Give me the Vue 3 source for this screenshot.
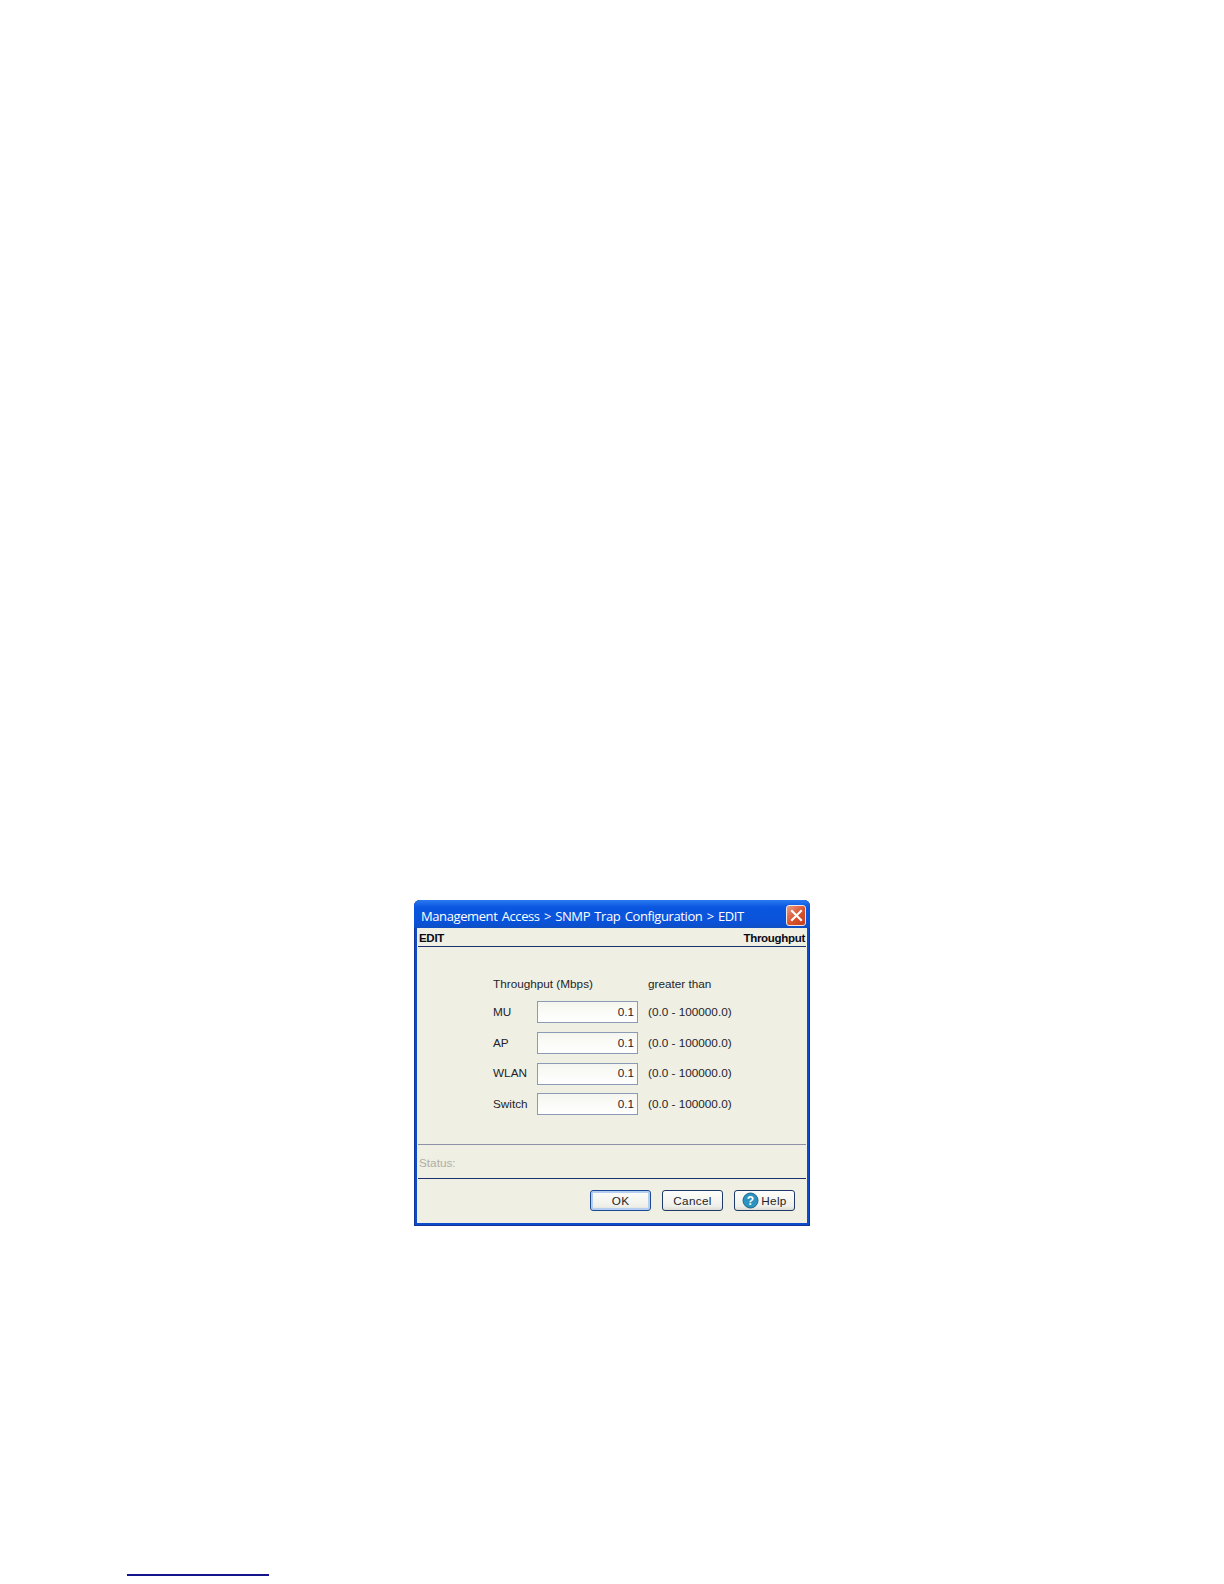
<template>
  <div class="page">
    <div class="window">
      <div class="titlebar">
        <span class="title">Management Access &gt; SNMP Trap Configuration &gt; EDIT</span>
        <div class="close">
          <svg width="13" height="13" viewBox="0 0 13 13">
            <path d="M2 2 L11 11 M11 2 L2 11" stroke="#fff" stroke-width="2.2" stroke-linecap="square" fill="none" />
          </svg>
        </div>
      </div>
      <div class="body">
        <div class="head">
          <span>EDIT</span>
          <span>Throughput</span>
        </div>
        <div class="form">
          <div class="form-head">
            <span class="col-title">Throughput (Mbps)</span>
            <span>greater than</span>
          </div>
          <div v-for="row in rows" :key="row" class="row">
            <label class="label">{{ row }}</label>
            <input class="field" value="0.1" readonly>
            <span class="hint">(0.0 - 100000.0)</span>
          </div>
        </div>
        <div class="status">Status:</div>
        <div class="actions">
          <button class="btn btn-default">OK</button>
          <button class="btn">Cancel</button>
          <button class="btn btn-help">
            <svg width="17" height="17" viewBox="0 0 17 17">
              <circle cx="8.5" cy="8.5" r="7.5" fill="#2a93c0" stroke="#1a6a8c" stroke-width="1" />
              <text x="8.5" y="12.5" text-anchor="middle" class="q">?</text>
            </svg>
            Help
          </button>
        </div>
      </div>
    </div>
    <div class="footnote"></div>
  </div>
</template>

<script setup>
const rows = ['MU', 'AP', 'WLAN', 'Switch']
</script>

<style>
html, body {
  margin: 0;
  background: #fff;
}
</style>

<style scoped>
.page {
  height: 1584px;
  box-sizing: border-box;
  padding: 900px 0 0 127px;
  display: flex;
  flex-direction: column;
  font-family: "Liberation Sans", Arial, sans-serif;
  font-size: 11.75px;
  color: #231f2c;
  overflow: hidden;
}

.window {
  width: 396px;
  height: 326px;
  margin-left: 287px;
  box-sizing: border-box;
  display: flex;
  flex-direction: column;
  background: #0c4ccc;
  box-shadow: inset 0 0 0 1px #12359a;
  border-radius: 6px 6px 0 0;
  padding: 0 3px 3px 3px;
}

.titlebar {
  height: 28px;
  flex: none;
  box-sizing: border-box;
  display: flex;
  align-items: center;
  justify-content: space-between;
  margin: 0 -3px;
  padding: 3px 4px 0 7px;
  border-radius: 6px 6px 0 0;
  background: linear-gradient(#2a7af2, #0b57e0 25%, #0a52d8 80%, #0f4fc4);
}

.title {
  color: #fff;
  font-family: "Open Sans", "Liberation Sans", sans-serif;
  font-size: 13px;
  letter-spacing: -0.4px;
  word-spacing: 1.3px;
}

.close {
  width: 20px;
  height: 21px;
  box-sizing: border-box;
  display: flex;
  align-items: center;
  justify-content: center;
  background: linear-gradient(135deg, #ec9c83, #d9502c 55%, #c2401f);
  border: 1px solid #f2e6e0;
  border-radius: 3px;
}

.body {
  flex: 1;
  display: flex;
  flex-direction: column;
  background: #efefe3;
  padding: 0 1px;
}

.head {
  height: 19px;
  flex: none;
  box-sizing: border-box;
  display: flex;
  justify-content: space-between;
  align-items: center;
  padding: 2px 1px 0;
  font-size: 11.5px;
  font-weight: bold;
  letter-spacing: -0.3px;
  color: #0a0a14;
  border-bottom: 1px solid #1c2f6e;
}

.form {
  height: 198px;
  flex: none;
  box-sizing: border-box;
  padding: 29px 0 0 75px;
  display: flex;
  flex-direction: column;
  border-bottom: 1px solid #8d92a8;
}

.form-head {
  display: flex;
  height: 14px;
  align-items: center;
  margin-bottom: 7px;
}

.col-title {
  width: 155px;
}

.row {
  display: flex;
  align-items: center;
  height: 30.7px;
}

.label {
  width: 44px;
  padding-bottom: 2px;
}

.field {
  width: 101px;
  height: 22px;
  box-sizing: border-box;
  border: 1px solid #8b9bb5;
  background: linear-gradient(#f6f6f0, #fff);
  text-align: right;
  padding: 0 3px 2px;
  font: inherit;
  color: inherit;
  outline: none;
}

.hint {
  margin-left: 10px;
  padding-bottom: 2px;
}

.status {
  height: 34px;
  flex: none;
  box-sizing: border-box;
  display: flex;
  align-items: center;
  padding: 2px 0 0 1px;
  color: #aeaea6;
  border-bottom: 1px solid #1c2f6e;
}

.actions {
  flex: 1;
  display: flex;
  justify-content: flex-end;
  align-items: flex-start;
  gap: 11px;
  padding: 11px 11px 0 0;
}

.btn {
  width: 61px;
  height: 21px;
  box-sizing: border-box;
  display: flex;
  align-items: center;
  justify-content: center;
  gap: 2px;
  padding: 0;
  font: inherit;
  letter-spacing: 0.3px;
  color: inherit;
  background: linear-gradient(#fdfdfb, #f0f0ea 80%, #dcdcd4);
  border: 1px solid #1f3a6a;
  border-radius: 3px;
}

.btn-default {
  box-shadow: inset 0 0 0 2px #b4cdf0;
  border-color: #1b4a92;
}

.q {
  font-family: "Liberation Sans", Arial, sans-serif;
  font-size: 12px;
  font-weight: bold;
  fill: #fff;
}

.footnote {
  width: 142px;
  height: 2px;
  margin-top: 348px;
  background: #14148c;
}
</style>
